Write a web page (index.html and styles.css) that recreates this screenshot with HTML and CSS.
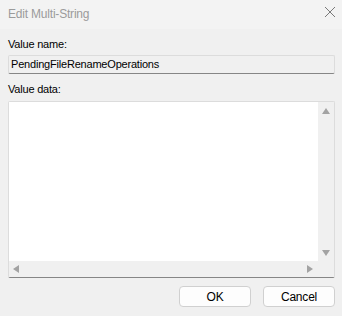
FILE: index.html
```html
<!DOCTYPE html>
<html lang="en">
<head>
    <meta charset="UTF-8">
    <title>Edit Multi-String</title>
    <link rel="stylesheet" href="styles.css">
</head>
<body>

    <div class="dialog">
        <div class="title-bar">
            <span class="title">Edit Multi-String</span>
            <svg class="close" width="12" height="12" viewBox="0 0 12 12">
                <path d="M1 1 L11 11 M11 1 L1 11" stroke="#7a7a7a" stroke-width="1" fill="none"/>
            </svg>
        </div>

        <div class="content">
            <label class="field-label">Value name:</label>
            <div class="name-box">PendingFileRenameOperations</div>

            <label class="field-label">Value data:</label>
            <div class="data-box">
                <div class="data-row">
                    <div class="data-text"></div>
                    <div class="v-scroll">
                        <span class="arrow arrow-up"></span>
                        <span class="arrow arrow-down"></span>
                    </div>
                </div>
                <div class="h-row">
                    <div class="h-scroll">
                        <span class="arrow arrow-left"></span>
                        <span class="arrow arrow-right"></span>
                    </div>
                    <div class="corner"></div>
                </div>
            </div>

            <div class="buttons">
                <button class="btn">OK</button>
                <button class="btn">Cancel</button>
            </div>
        </div>
    </div>

</body>
</html>
```

FILE: styles.css
```css
body {
    margin: 0;
    padding: 0;
    background-color: #f0f0f0;
    font-family: "Segoe UI", "Liberation Sans", sans-serif;
    font-size: 11px;
    letter-spacing: -0.2px;
    color: #000;
}

.dialog {
    width: 342px;
    height: 316px;
    background-color: #f0f0f0;
    display: flex;
    flex-direction: column;
}

.title-bar {
    height: 29px;
    background-color: #f3f3f3;
    display: flex;
    align-items: center;
    justify-content: space-between;
    padding: 0 6px 0 8px;
}

.title {
    color: #9b9b9b;
    font-size: 12px;
    letter-spacing: -0.2px;
    margin-top: -1px;
}

.close {
    margin-top: -5px;
}

.content {
    padding: 0 7px 0 8px;
    display: flex;
    flex-direction: column;
}

.field-label {
    display: block;
    line-height: 16px;
    margin-top: 7px;
}

.name-box {
    margin-top: 3px;
    height: 17px;
    line-height: 17px;
    padding-left: 2px;
    background-color: #f0f0f0;
    border: 1px solid #dcdcdc;
    border-bottom-color: #868686;
    border-radius: 2px;
}

.data-box {
    margin-top: 4px;
    border: 1px solid #dcdcdc;
    border-bottom-color: #868686;
    border-radius: 2px;
    background-color: #fff;
    display: flex;
    flex-direction: column;
}

.data-row {
    display: flex;
    height: 159px;
}

.data-text {
    flex: 1;
    background-color: #fff;
}

.v-scroll {
    width: 16px;
    background-color: #f0f0f0;
    display: flex;
    flex-direction: column;
    justify-content: space-between;
    align-items: center;
    padding: 6px 0 5px;
}

.h-row {
    display: flex;
    height: 16px;
}

.h-scroll {
    flex: 1;
    background-color: #f0f0f0;
    display: flex;
    justify-content: space-between;
    align-items: center;
    padding: 0 5px 0 4px;
}

.corner {
    width: 16px;
    background-color: #f0f0f0;
}

.arrow {
    display: block;
    width: 0;
    height: 0;
}

.arrow-up {
    border-left: 4px solid transparent;
    border-right: 4px solid transparent;
    border-bottom: 6px solid #a3a3a3;
}

.arrow-down {
    border-left: 4px solid transparent;
    border-right: 4px solid transparent;
    border-top: 6px solid #a3a3a3;
}

.arrow-left {
    border-top: 4px solid transparent;
    border-bottom: 4px solid transparent;
    border-right: 6px solid #a3a3a3;
}

.arrow-right {
    border-top: 4px solid transparent;
    border-bottom: 4px solid transparent;
    border-left: 6px solid #a3a3a3;
}

.buttons {
    display: flex;
    justify-content: flex-end;
    gap: 12px;
    margin-top: 8px;
}

.btn {
    width: 72px;
    height: 21px;
    padding: 0;
    font-family: inherit;
    font-size: 12px;
    letter-spacing: -0.2px;
    color: #000;
    background-color: #fdfdfd;
    border: 1px solid #d0d0d0;
    border-radius: 4px;
}
```
